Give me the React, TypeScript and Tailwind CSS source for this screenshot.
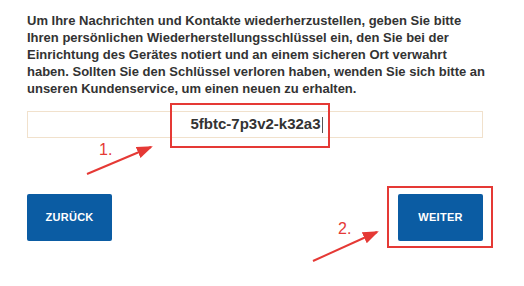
import React from 'react';

const App = () => {
  return (
    <div
      className="relative w-[524px] h-[286px] bg-white overflow-hidden"
      style={{ fontFamily: '"Liberation Sans", Arial, sans-serif' }}
    >
      <div className="px-[27px] pt-[12px]">
        {/* Hinweistext */}
        <p className="text-[13px] leading-[17px] font-bold text-[#333333]">
          Um Ihre Nachrichten und Kontakte wiederherzustellen, geben Sie bitte
          <br />
          Ihren persönlichen Wiederherstellungsschlüssel ein, den Sie bei der
          <br />
          Einrichtung des Gerätes notiert und an einem sicheren Ort verwahrt
          <br />
          haben. Sollten Sie den Schlüssel verloren haben, wenden Sie sich bitte an
          <br />
          unseren Kundenservice, um einen neuen zu erhalten.
        </p>

        {/* Eingabefeld */}
        <div className="relative mt-[14px] w-[456px] h-[27px] border border-[#f1e1cc] flex items-center justify-center">
          <span className="text-[15px] font-bold text-[#333333] pl-[3px]">
            5fbtc-7p3v2-k32a3
          </span>
          <span className="w-px h-[16px] bg-[#555] ml-[1px]" />
          <div className="absolute left-[142px] top-[-9px] w-[160px] h-[45px] border-2 border-[#e53935]" />
        </div>

        {/* Buttons */}
        <div className="mt-[56px] flex justify-between w-[456px]">
          <button className="w-[85px] h-[47px] bg-[#0b5ca3] rounded-[2px] text-white text-[11px] font-bold tracking-[0.3px]">
            ZURÜCK
          </button>
          <div className="relative">
            <button className="w-[85px] h-[47px] bg-[#0b5ca3] rounded-[2px] text-white text-[11px] font-bold tracking-[0.3px]">
              WEITER
            </button>
            <div className="absolute left-[-11px] top-[-8px] w-[106px] h-[62px] border-2 border-[#e53935]" />
          </div>
        </div>
      </div>

      {/* Markierungen */}
      <span className="absolute left-[99px] top-[138px] text-[16px] text-[#e53935]">1.</span>
      <span className="absolute left-[338px] top-[217px] text-[16px] text-[#e53935]">2.</span>
      <svg className="absolute left-0 top-0" width="524" height="286" viewBox="0 0 524 286">
        <defs>
          <marker id="ah" markerWidth="8" markerHeight="6" refX="7" refY="3" orient="auto">
            <path d="M0,0 L8,3 L0,6 z" fill="#e53935" />
          </marker>
        </defs>
        <line x1="87" y1="174" x2="151" y2="147" stroke="#e53935" strokeWidth="2" markerEnd="url(#ah)" />
        <line x1="313" y1="261" x2="377" y2="232" stroke="#e53935" strokeWidth="2" markerEnd="url(#ah)" />
      </svg>
    </div>
  );
};

export default App;
